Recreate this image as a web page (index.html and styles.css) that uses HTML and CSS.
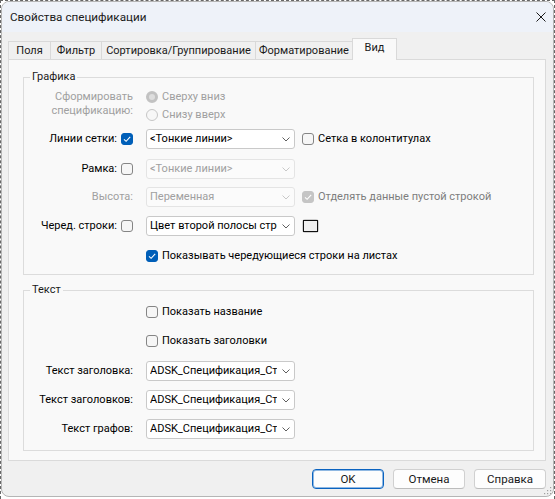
FILE: index.html
```html
<!DOCTYPE html>
<html lang="ru">
<head>
<meta charset="utf-8">
<title>Свойства спецификации</title>
<link rel="stylesheet" href="styles.css">
</head>
<body>
<div class="desk">
<div class="window">
  <div class="titlebar">
    <span class="title">Свойства спецификации</span>
    <svg class="close" width="10" height="10" viewBox="0 0 10 10"><path d="M0.5 0.5L9.5 9.5M9.5 0.5L0.5 9.5" stroke="#1a1a1a" stroke-width="1"/></svg>
  </div>
  <div class="content">
    <div class="tabs">
      <div class="tab t1">Поля</div>
      <div class="tab t2">Фильтр</div>
      <div class="tab t3">Сортировка/Группирование</div>
      <div class="tab t4">Форматирование</div>
      <div class="tab t5 active">Вид</div>
    </div>
    <div class="panel">
      <fieldset class="group g-graphics">
        <legend>Графика</legend>
        <div class="row-order">
          <div class="lbl-stack disabled"><span class="line">Сформировать</span><span class="line">спецификацию:</span></div>
          <div class="radios">
            <div class="opt disabled"><span class="radio on"></span>Сверху вниз</div>
            <div class="opt disabled"><span class="radio"></span>Снизу вверх</div>
          </div>
        </div>
        <div class="row mt5">
          <div class="lbl">Линии сетки:<span class="cb checked"><svg width="12" height="12" viewBox="0 0 12 12"><path d="M3 6.3L5.1 8.3L9.2 3.9" fill="none" stroke="#fff" stroke-width="1.1"/></svg></span></div>
          <div class="combo"><span class="val">&lt;Тонкие линии&gt;</span><svg class="chev" width="8" height="5" viewBox="0 0 8 5"><path d="M0.5 0.5L4 4L7.5 0.5" fill="none" stroke="#5f5f5f" stroke-width="1"/></svg></div>
          <div class="opt col3"><span class="cb"></span>Сетка в колонтитулах</div>
        </div>
        <div class="row mt10">
          <div class="lbl">Рамка:<span class="cb"></span></div>
          <div class="combo disabled"><span class="val">&lt;Тонкие линии&gt;</span><svg class="chev" width="8" height="5" viewBox="0 0 8 5"><path d="M0.5 0.5L4 4L7.5 0.5" fill="none" stroke="#c8c8c8" stroke-width="1"/></svg></div>
        </div>
        <div class="row mt8">
          <div class="lbl disabled">Высота:</div>
          <div class="combo disabled"><span class="val">Переменная</span><svg class="chev" width="8" height="5" viewBox="0 0 8 5"><path d="M0.5 0.5L4 4L7.5 0.5" fill="none" stroke="#c8c8c8" stroke-width="1"/></svg></div>
          <div class="opt col3 disabled-dark"><span class="cb checked-disabled"><svg width="12" height="12" viewBox="0 0 12 12"><path d="M3 6.3L5.1 8.3L9.2 3.9" fill="none" stroke="#fff" stroke-width="1.1"/></svg></span>Отделять данные пустой строкой</div>
        </div>
        <div class="row mt9">
          <div class="lbl">Черед. строки:<span class="cb"></span></div>
          <div class="combo"><span class="val">Цвет второй полосы строк</span><svg class="chev" width="8" height="5" viewBox="0 0 8 5"><path d="M0.5 0.5L4 4L7.5 0.5" fill="none" stroke="#5f5f5f" stroke-width="1"/></svg></div>
          <div class="swatch-btn col3"><span class="swatch"></span></div>
        </div>
        <div class="row mt10">
          <div class="opt indent"><span class="cb checked"><svg width="12" height="12" viewBox="0 0 12 12"><path d="M3 6.3L5.1 8.3L9.2 3.9" fill="none" stroke="#fff" stroke-width="1.1"/></svg></span>Показывать чередующиеся строки на листах</div>
        </div>
      </fieldset>
      <fieldset class="group g-text">
        <legend>Текст</legend>
        <div class="row">
          <div class="opt indent"><span class="cb"></span>Показать название</div>
        </div>
        <div class="row mt9">
          <div class="opt indent"><span class="cb"></span>Показать заголовки</div>
        </div>
        <div class="row mt10">
          <div class="lbl">Текст заголовка:</div>
          <div class="combo"><span class="val">ADSK_Спецификация_Строки</span><svg class="chev" width="8" height="5" viewBox="0 0 8 5"><path d="M0.5 0.5L4 4L7.5 0.5" fill="none" stroke="#5f5f5f" stroke-width="1"/></svg></div>
        </div>
        <div class="row mt9">
          <div class="lbl">Текст заголовков:</div>
          <div class="combo"><span class="val">ADSK_Спецификация_Строки</span><svg class="chev" width="8" height="5" viewBox="0 0 8 5"><path d="M0.5 0.5L4 4L7.5 0.5" fill="none" stroke="#5f5f5f" stroke-width="1"/></svg></div>
        </div>
        <div class="row mt9">
          <div class="lbl">Текст графов:</div>
          <div class="combo"><span class="val">ADSK_Спецификация_Строки</span><svg class="chev" width="8" height="5" viewBox="0 0 8 5"><path d="M0.5 0.5L4 4L7.5 0.5" fill="none" stroke="#5f5f5f" stroke-width="1"/></svg></div>
        </div>
      </fieldset>
    </div>
    <div class="buttons">
      <button class="btn default">OK</button>
      <button class="btn">Отмена</button>
      <button class="btn">Справка</button>
    </div>
  </div>
  <svg class="grip" width="8" height="8" viewBox="0 0 8 8"><g fill="#a0a0a0"><rect x="6" y="0" width="1.2" height="1.2"/><rect x="3" y="3" width="1.2" height="1.2"/><rect x="6" y="3" width="1.2" height="1.2"/><rect x="0" y="6" width="1.2" height="1.2"/><rect x="3" y="6" width="1.2" height="1.2"/><rect x="6" y="6" width="1.2" height="1.2"/></g></svg>
</div>
</div>
</body>
</html>
```
FILE: styles.css
```css
* { box-sizing: border-box; }
html, body { margin: 0; padding: 0; }
body {
  width: 555px;
  height: 499px;
  overflow: hidden;
  background: #ffffff;
  font-family: Roboto, "Noto Sans", sans-serif;
  font-size: 11px;
  line-height: 14px;
  color: #000;
}
.desk {
  width: 555px;
  height: 499px;
  border-top: 1px dashed #666;
  border-left: 1px dashed #666;
  border-right: 1px dashed #666;
}
.window {
  position: relative;
  width: 553px;
  height: 496px;
  border: 1px solid #b5b5b5;
  border-radius: 8px;
  background: #f0f0f0;
  overflow: hidden;
  display: flex;
  flex-direction: column;
}
.titlebar {
  height: 30px;
  flex: none;
  background: #eef2f9;
  display: flex;
  align-items: center;
  padding: 0 7px 0 8px;
}
.title { font-size: 11.7px; color: #1a1a1a; }
.close { margin-left: auto; }
.content {
  flex: 1;
  display: flex;
  flex-direction: column;
  padding: 6px 7px 7px 6px;
}
.tabs {
  display: flex;
  align-items: flex-end;
  height: 21px;
  flex: none;
}
.tab {
  height: 18px;
  border: 1px solid #d9d9d9;
  border-bottom: none;
  background: #f0f0f0;
  text-align: center;
  line-height: 17px;
  white-space: nowrap;
  color: #1a1a1a;
}
.tab + .tab { margin-left: -1px; }
.t1 { width: 43px; }
.t2 { width: 52px; }
.t3 { width: 155px; }
.t4 { width: 98px; }
.t5 { width: 45px; }
.tab.active {
  position: relative;
  z-index: 1;
  height: 22px;
  margin-bottom: -1px;
  background: #f9f9f9;
  line-height: 18px;
}
.panel {
  border: 1px solid #dadada;
  background: #f9f9f9;
  padding: 0 11px 9px 14px;
  flex: none;
}
.group {
  margin: 0;
  padding: 0;
  border: 1px solid #dcdcdc;
  min-width: 0;
}
.group legend {
  margin-left: 6px;
  padding: 0 2px;
  line-height: 14px;
  color: #1a1a1a;
}
.g-graphics { margin-top: 10px; padding-top: 4px; padding-bottom: 8px; }
.g-text { margin-top: 8px; padding-top: 5px; padding-bottom: 11px; }
.row {
  display: flex;
  align-items: center;
  height: 20px;
}
.row-order {
  display: flex;
  align-items: flex-start;
  height: 36px;
}
.mt5 { margin-top: 5px; }
.mt8 { margin-top: 8px; }
.mt9 { margin-top: 9px; }
.mt10 { margin-top: 10px; }
.lbl {
  width: 109px;
  flex: none;
  display: flex;
  align-items: center;
  justify-content: flex-end;
  gap: 4px;
  white-space: nowrap;
}
.lbl-stack {
  width: 109px;
  flex: none;
  display: flex;
  flex-direction: column;
  align-items: flex-end;
  padding-top: 2px;
}
.lbl-stack .line {
  height: 14px;
  line-height: 14px;
  white-space: nowrap;
}
.disabled { color: #a0a0a0; }
.disabled-dark { color: #7d7d7d; }
.radios {
  margin-left: 13px;
  display: flex;
  flex-direction: column;
}
.opt {
  display: flex;
  align-items: center;
  gap: 4px;
  height: 18px;
  white-space: nowrap;
}
.indent { margin-left: 122px; }
.col3 { margin-left: 7px; }
.radio {
  width: 12px;
  height: 12px;
  border-radius: 50%;
  border: 1px solid #c6c6c6;
  background: #f7f7f7;
  flex: none;
}
.radio.on {
  border: 3px solid #c2c2c2;
  background: #dedede;
}
.cb {
  width: 12px;
  height: 12px;
  flex: none;
  border: 1px solid #858585;
  border-radius: 3px;
  background: #f6f6f6;
  display: flex;
  align-items: center;
  justify-content: center;
}
.cb svg { display: block; flex: none; }
.cb.checked {
  border-color: #005fb8;
  background: #005fb8;
}
.cb.checked-disabled {
  border-color: #c5c5c5;
  background: #c5c5c5;
}
.combo {
  margin-left: 13px;
  width: 149px;
  height: 20px;
  flex: none;
  display: flex;
  align-items: center;
  border: 1px solid #c9c9c9;
  border-radius: 3px;
  background: #ffffff;
  padding-left: 3px;
}
.combo.disabled {
  border-color: #e4e4e4;
  background: #fbfbfb;
  color: #a0a0a0;
}
.val {
  width: 127px;
  height: 18px;
  line-height: 18px;
  flex: none;
  overflow: hidden;
  white-space: nowrap;
}
.chev { margin: 0 4px 0 5px; flex: none; }
.swatch-btn {
  width: 17px;
  height: 14px;
  border: 1px solid #cfcfcf;
  border-radius: 3px;
  display: flex;
  align-items: center;
  justify-content: center;
  background: #fdfdfd;
}
.swatch {
  width: 15px;
  height: 12px;
  border: 1px solid #111;
  background: #f0f0f0;
}
.buttons {
  display: flex;
  justify-content: flex-end;
  gap: 9px;
  margin-top: 8px;
}
.btn {
  width: 72px;
  height: 20px;
  padding: 0;
  font-family: inherit;
  font-size: 11.5px;
  color: #1a1a1a;
  background: #fdfdfd;
  border: 1px solid #d0d0d0;
  border-bottom-color: #bcbcbc;
  border-radius: 4px;
}
.btn.default {
  border-color: #0a63c0;
  box-shadow: inset 0 0 0 1px rgba(10, 99, 192, 0.45);
}
.grip {
  position: absolute;
  right: 1px;
  bottom: 1px;
}
```
